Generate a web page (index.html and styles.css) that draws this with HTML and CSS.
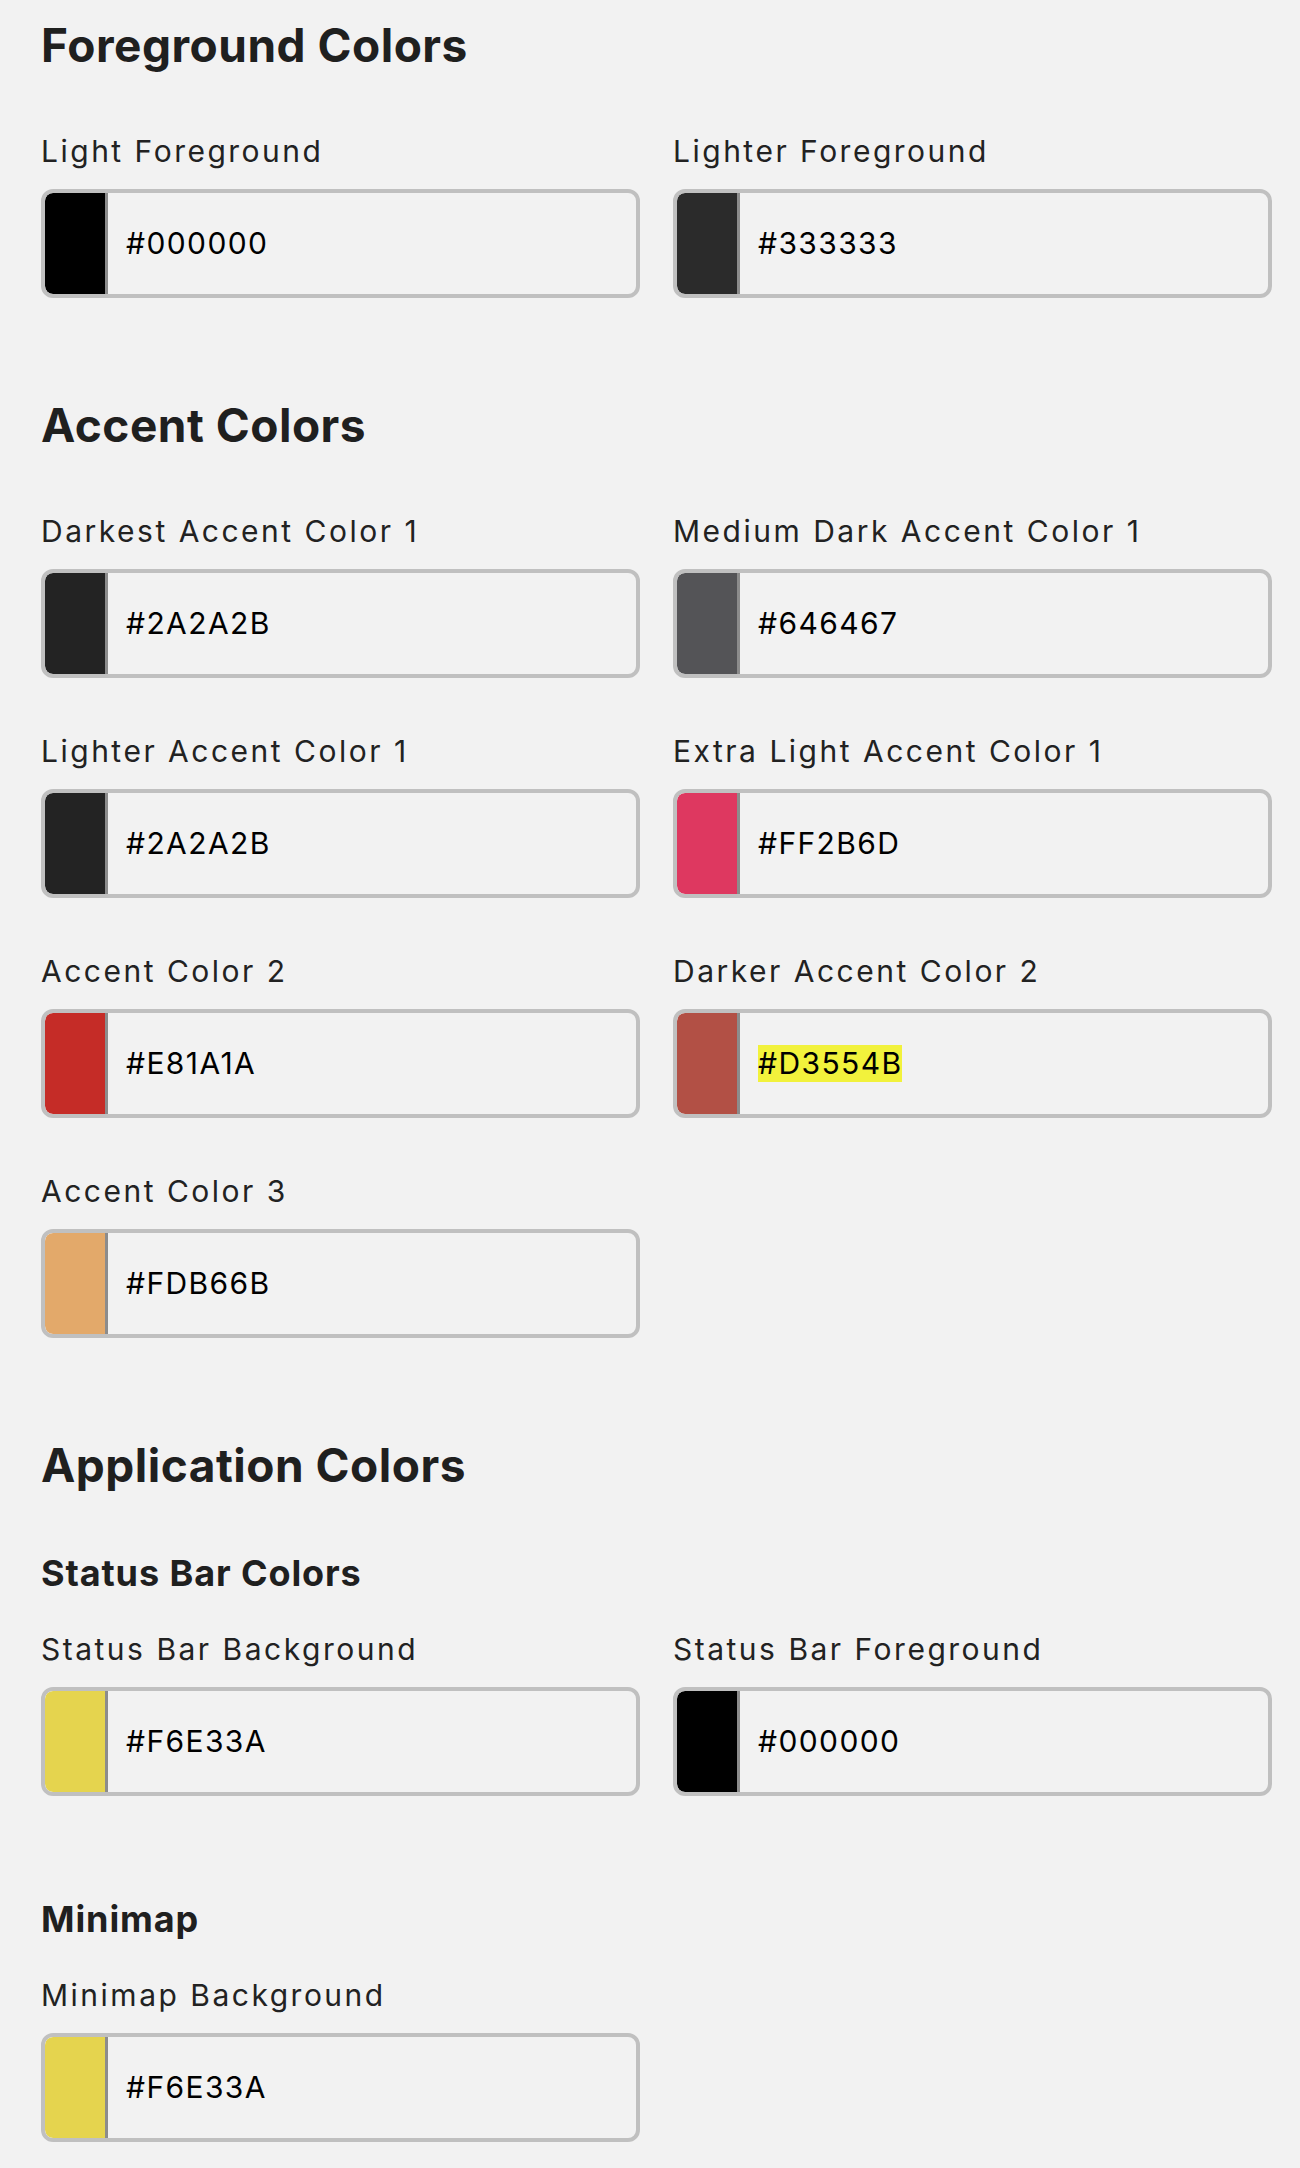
FILE: index.html
```html
<!DOCTYPE html>
<html lang="en">
<head>
<meta charset="utf-8">
<title>Theme Colors</title>
<link rel="stylesheet" href="styles.css">
</head>
<body>
<main class="page">
  <section class="group">
    <h2 class="group-title">Foreground Colors</h2>
    <div class="grid">
      <div class="field">
        <div class="label">Light Foreground</div>
        <div class="picker"><span class="swatch sw-000000"></span><span class="hex">#000000</span></div>
      </div>
      <div class="field">
        <div class="label">Lighter Foreground</div>
        <div class="picker"><span class="swatch sw-333333"></span><span class="hex">#333333</span></div>
      </div>
    </div>
  </section>

  <section class="group">
    <h2 class="group-title">Accent Colors</h2>
    <div class="grid">
      <div class="field">
        <div class="label">Darkest Accent Color 1</div>
        <div class="picker"><span class="swatch sw-2a2a2b"></span><span class="hex">#2A2A2B</span></div>
      </div>
      <div class="field">
        <div class="label">Medium Dark Accent Color 1</div>
        <div class="picker"><span class="swatch sw-646467"></span><span class="hex">#646467</span></div>
      </div>
      <div class="field">
        <div class="label">Lighter Accent Color 1</div>
        <div class="picker"><span class="swatch sw-2a2a2b"></span><span class="hex">#2A2A2B</span></div>
      </div>
      <div class="field">
        <div class="label">Extra Light Accent Color 1</div>
        <div class="picker"><span class="swatch sw-ff2b6d"></span><span class="hex">#FF2B6D</span></div>
      </div>
      <div class="field">
        <div class="label">Accent Color 2</div>
        <div class="picker"><span class="swatch sw-e81a1a"></span><span class="hex">#E81A1A</span></div>
      </div>
      <div class="field">
        <div class="label">Darker Accent Color 2</div>
        <div class="picker"><span class="swatch sw-d3554b"></span><span class="hex"><mark class="highlight">#D3554B</mark></span></div>
      </div>
      <div class="field">
        <div class="label">Accent Color 3</div>
        <div class="picker"><span class="swatch sw-fdb66b"></span><span class="hex">#FDB66B</span></div>
      </div>
    </div>
  </section>

  <section class="group">
    <h2 class="group-title">Application Colors</h2>
    <div class="subgroup">
      <h3 class="subgroup-title">Status Bar Colors</h3>
      <div class="grid">
        <div class="field">
          <div class="label">Status Bar Background</div>
          <div class="picker"><span class="swatch sw-f6e33a"></span><span class="hex">#F6E33A</span></div>
        </div>
        <div class="field">
          <div class="label">Status Bar Foreground</div>
          <div class="picker"><span class="swatch sw-000000"></span><span class="hex">#000000</span></div>
        </div>
      </div>
    </div>
    <div class="subgroup">
      <h3 class="subgroup-title">Minimap</h3>
      <div class="grid">
        <div class="field">
          <div class="label">Minimap Background</div>
          <div class="picker"><span class="swatch sw-f6e33a"></span><span class="hex">#F6E33A</span></div>
        </div>
      </div>
    </div>
  </section>
</main>
</body>
</html>
```

FILE: styles.css
```css
* { box-sizing: border-box; }

html, body {
  margin: 0;
  padding: 0;
  background: #f2f2f2;
}

body {
  font-family: Inter, "Noto Sans", "Liberation Sans", sans-serif;
  color: #1f201f;
}

.page {
  padding: 17px 0 0 41px;
  width: 1272px;
}

.group + .group {
  margin-top: 99px;
}

.group-title {
  margin: 0 0 60px;
  font-size: 46px;
  line-height: 56px;
  font-weight: 700;
  letter-spacing: 0.5px;
}

.subgroup-title {
  margin: 0 0 38px;
  font-size: 36px;
  line-height: 40px;
  font-weight: 700;
  letter-spacing: 0.9px;
}

.group-title + .subgroup {
  margin-top: 2px;
}

.subgroup + .subgroup {
  margin-top: 103px;
}

.grid {
  display: grid;
  grid-template-columns: 599px 599px;
  column-gap: 33px;
  row-gap: 55px;
}

.label {
  font-size: 30px;
  line-height: 36px;
  font-weight: 400;
  letter-spacing: 2.5px;
  color: #222;
  margin-bottom: 20px;
}

.picker {
  display: flex;
  align-items: stretch;
  height: 109px;
  border: 4px solid #c0c0c0;
  border-radius: 12px;
  overflow: hidden;
}

.swatch {
  width: 63px;
  flex: none;
  border-right: 3px solid #8c8c8c;
  border-radius: 8px 0 0 8px;
}

.hex {
  display: flex;
  align-items: center;
  padding-left: 18px;
  font-size: 30px;
  line-height: 37px;
  letter-spacing: 1.4px;
  color: #000;
}

.highlight {
  background: #f2f23c;
  color: #000;
}

.sw-000000 { background: #000000; }
.sw-333333 { background: #2b2b2b; }
.sw-2a2a2b { background: #232323; }
.sw-646467 { background: #545457; }
.sw-ff2b6d { background: #de3860; }
.sw-e81a1a { background: #c52c27; }
.sw-d3554b { background: #b25045; }
.sw-fdb66b { background: #e3a96a; }
.sw-f6e33a { background: #e5d44e; }
```
